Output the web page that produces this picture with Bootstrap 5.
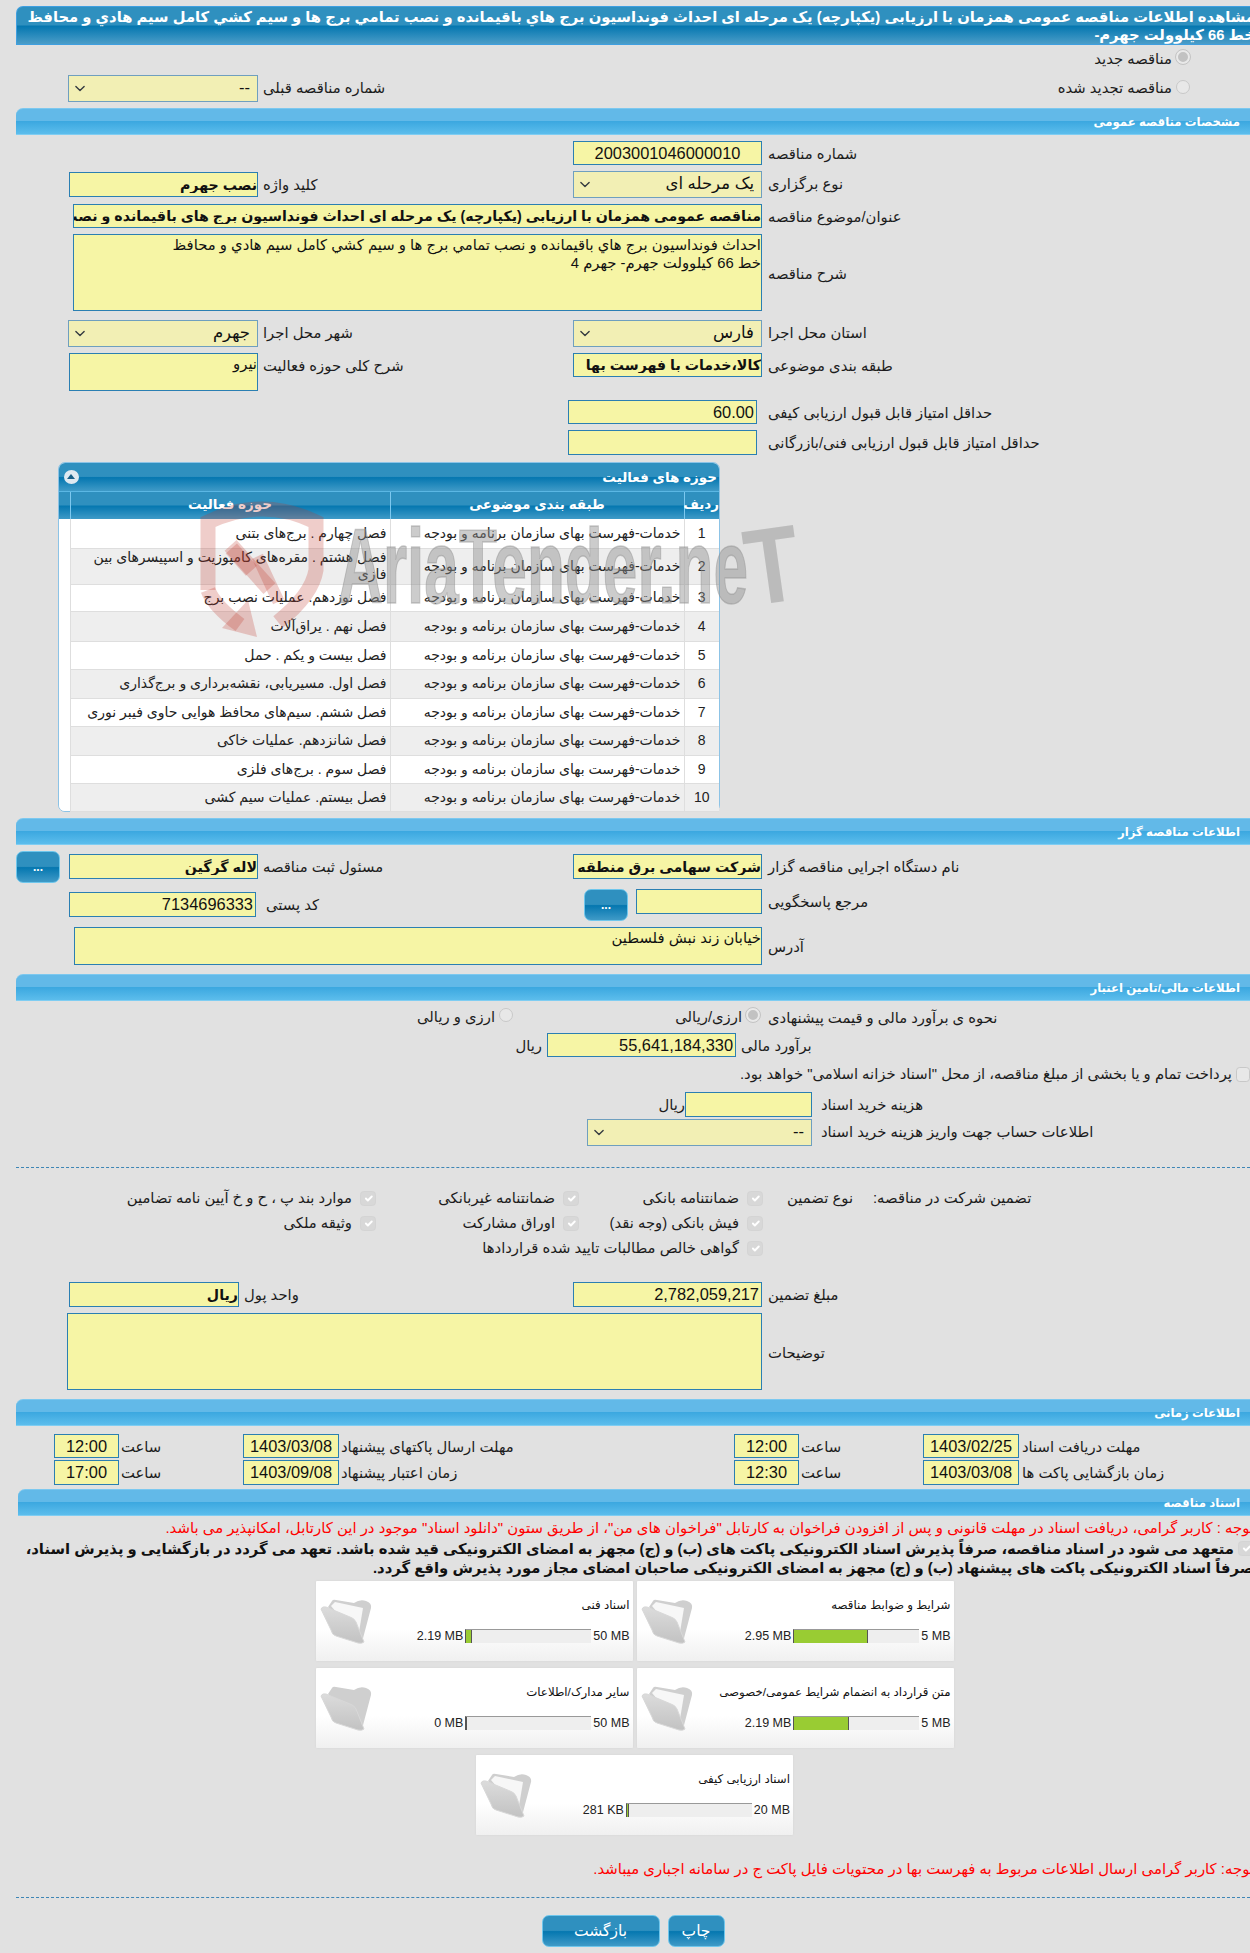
<!DOCTYPE html>
<html lang="fa" dir="rtl">
<head>
<meta charset="utf-8">
<title>مشاهده اطلاعات مناقصه</title>
<link href="https://cdn.jsdelivr.net/npm/bootstrap@5.3.0/dist/css/bootstrap.min.css" rel="stylesheet">
<style>
html,body{margin:0;background:#e1e1e1;overflow:hidden}
body{width:1250px;height:1953px;font-family:"Liberation Sans","DejaVu Sans",sans-serif;font-size:14.8px;color:#1c1c1c;line-height:17px}
.sheet{padding-left:16px;padding-top:6px;width:1250px;height:1953px;overflow:hidden}
.ttl{height:39px;background:linear-gradient(#2f90bf 0,#2f90bf 48%,#0577b0 52%,#4b9dc8 100%);border:1px solid #3f9fe0;border-right:0;border-radius:7px 0 0 0;color:#fff;font-weight:700;font-size:14.75px;line-height:18px;padding:1px 0 0 2px;margin:0 -5px 0 0;text-align:right}
.bar{height:27px;background:linear-gradient(#62b9e8 0,#62b9e8 47%,#3ca8e0 50%,#5cbdec 100%);border-top:1px solid #7cc8ef;border-bottom:1px solid #7fcdf2;border-radius:7px 0 0 0;color:#fff;font-weight:700;font-size:11.7px;line-height:25px;padding-right:10px;text-align:right}
.bar-in{margin-left:2px}
.lb{flex:none;text-align:left;line-height:22px;padding-top:2px}
.rh{width:677px;flex:none}
.lh{width:557px;flex:none}
.fv,.sv{flex:none;border-radius:0;font-family:"Liberation Sans","DejaVu Sans",sans-serif;color:#111;box-shadow:none!important}
.fv{background:#f6f5a5;border:1px solid #2b7fb2;font-size:16.4px;line-height:20px;min-height:0;text-align:right;resize:none;padding:0 2px}
.fv:focus{background:#f6f5a5;border-color:#2b7fb2;color:#111}
.fb{font-weight:700;font-size:14.2px;padding:0}
.fc{text-align:center}
.fl{font-size:14.8px;line-height:18px;padding:1px 0 0}
.sv{background-color:#f2efb4;border:1px solid #6f9fbf;font-size:16.5px;height:27px;min-height:0;padding:0 7px 3px 20px;background-position:left 4px center;background-size:14px 11px;line-height:20px}
.sv:focus{background-color:#f2efb4;border-color:#6f9fbf}
.dash{border:0;border-top:1px dashed #3d86b5;opacity:1;margin:0}
.w65{width:65px}.w96{width:96px}.w126{width:126px}.w127{width:127px}.w170{width:170px}.w187{width:187px}.w188{width:188px}.w189{width:189px}.w190{width:190px}.w225{width:225px}.w688{width:688px}.w689{width:689px}.w695{width:695px}
.h18{height:18px}.h24{height:24px}.h25{height:25px}.h26{height:26px}.h27{height:27px}.h32{height:32px}.h38{height:38px}.h77{height:77px}
.l482{width:482px}.l310{width:310px}.l307{width:307px}.l509{width:509px}.l429{width:429px}.l329{width:329px}.l228{width:228px}.l122{width:122px}.l393{width:393px}
.mt1x{margin-top:1px}.mt2x{margin-top:2px}.mt3x{margin-top:3px}.mt4x{margin-top:4px}.mt5x{margin-top:5px}.mt6x{margin-top:6px}.mt7x{margin-top:7px}.mt8x{margin-top:8px}.mt9x{margin-top:9px}.mt17x{margin-top:17px}.mt18x{margin-top:18px}.mt19x{margin-top:19px}.mt21x{margin-top:21px}.mt26x{margin-top:26px}
.ml2x{margin-left:2px}.ml3x{margin-left:3px}.ml5x{margin-left:5px}.ml6x{margin-left:6px}.ml8x{margin-left:8px}.ml9x{margin-left:9px}.ml10x{margin-left:10px}.ml11x{margin-left:11px}.mr2x{margin-right:2px}
.pr60{padding-right:60px}.gr1{width:247px;flex:none}
.rd{width:14px;height:14px;margin:0 0 0 4px;flex:none;background:#e8e8e8;border:1px solid #c8c8c8;opacity:1!important;background-image:none!important}
.rd:checked{background:#c2c2c2;border:2px solid #e9e9e9;outline:1px solid #c4c4c4;outline-offset:0}
.rdup{margin-top:-4px}
.cb{width:16px;height:15px;margin:0;flex:none;background-color:#d8d8d8;border:1px solid #d4d4d4;border-radius:2px;opacity:1!important}
.cb:checked{background-color:#d8d8d8;border-color:#d4d4d4}
.cb0{width:14px;background:#e8e8e8;border-color:#c8c8c8}
.panel{position:relative;width:662px;height:350px;margin-right:530px;background:#fff;border:1px solid #8cc3e6;border-radius:7px}
.ph{height:29px;background:linear-gradient(#2f90bf 0,#2f90bf 48%,#0577b0 52%,#3f9ac7 100%);border-radius:6px 6px 0 0;color:#fff;font-weight:700;font-size:13.5px;line-height:27px;padding:0 2px 0 5px;border-bottom:1px solid #5bb7e4}
.tgl{width:15px;height:14px;border-radius:50%;background:#dfe9f1;position:relative;flex:none}
.tgl:after{content:"";position:absolute;left:3px;top:4px;border:4.5px solid transparent;border-top:0;border-bottom:5px solid #185f88}
.tb{table-layout:fixed;width:660px;border-collapse:collapse;margin:0;font-size:14px}
.table.tb>:not(caption)>*>*{padding:0 3px;border:0;background:transparent;box-shadow:none;vertical-align:middle;line-height:21px;color:#222}
.table.tb>thead>tr>th{height:27px;background:linear-gradient(#2f90bf 0,#2f90bf 48%,#0577b0 52%,#3f9ac7 100%);color:#fff;font-weight:700;font-size:13.5px;text-align:center;border-left:1px solid #7cc8ef;padding:0 0 3px}
.table.tb>thead>tr>th:last-child{border-left:0}
.table.tb>tbody>tr>td{border-left:1px solid #dedede;border-bottom:1px solid #dedede;text-align:right}
.table.tb>tbody>tr>td:first-child{text-align:center}
.table.tb>tbody>tr>td:last-child{border:0;background:#fff}
.table.tb>tbody>tr.zeb>td{background:#eee}
.table.tb>tbody>tr.zeb>td:last-child{background:#fff}
.table.tb>tbody>tr:last-child>td:last-child{border-bottom-left-radius:6px}
.table.tb>tbody>tr>td.lh-sm{line-height:18px}
.r27{height:27px}.r28{height:28px}.r29{height:29px}.r30{height:30px}.r36{height:36px}
.c1{width:35px}.c2{width:294px}.c3{width:320px}.c4{width:11px}
.wm{position:absolute;left:131px;top:27px;pointer-events:none}
.bt{background:linear-gradient(#2f90bf 0,#2f90bf 48%,#0577b0 52%,#3f9ac7 100%);border:1px solid #6ec6ec;border-radius:7px;color:#fff;padding:0;font-size:15.5px;line-height:28px;flex:none}
.bt:hover{color:#fff}
.b44{width:44px;height:32px;font-weight:700;line-height:30px;font-size:12px}
.bsave{width:118px;height:32px}.bprint{width:57px;height:32px}
.gA{width:377px;text-align:left;flex:none}
.gB{width:110px;flex:none;padding-right:20px}
.gC{width:184px;flex:none}.gD{width:203px;flex:none}
.gs{margin-left:8px}
.note{color:#f00;line-height:17px;margin-right:-4px;font-size:14.9px}
.pledge{font-weight:700;color:#111;font-size:14.8px;line-height:19px;margin:3px -4px 0 0;padding:0}
.pledge .cb{vertical-align:-2px;margin-left:4px}
.cards{padding-left:3px}
.fcard{width:317px;height:80px;flex:none;background:linear-gradient(#fff 0,#fff 60%,#f0f0f0 100%);box-shadow:0 0 2px #d2d2d2;border-radius:1px}
.fb2{flex:1;padding:15px 3px 0 0;min-width:0;text-align:right}
.ftit{font-size:11.8px;line-height:18px;height:33px;color:#111}
.fsize{font-size:12.5px;line-height:14px;color:#222;flex:none}
.prog{width:126px;height:14px;flex:none;border-radius:0;background:#eee;border-top:1px solid #999;border-left:1px solid #555}
.prog .progress-bar{background:#9c3;border-right:1px solid #555}
.fico{width:52px;height:46px;margin:17px 0 0 4px;flex:none}
.mb7x{margin-bottom:7px}
</style>
</head>
<body>
<svg width="0" height="0" class="position-absolute">
<defs>
<linearGradient id="fg" x1="0" y1="0" x2="0" y2="1"><stop offset="0" stop-color="#dcdcdc"/><stop offset="1" stop-color="#c2c2c2"/></linearGradient>
<symbol id="fld" viewBox="0 0 52 46">
<path d="M8 9 L12 3 Q13 1 16 2 L34 5 Q40 1 46 3 Q52 5 51 10 L42 44 Q40 46 36 43 Z" fill="#cfcfcf"/>
<path d="M11 8 L15 4 L43 10 L38 40 Z" fill="#f7f7f7"/>
<path d="M1 11 Q2 8 6 9 L30 19 Q34 20 36 24 L44 44 Q42 46 38 45 L16 38 Q12 37 11 32 Z" fill="url(#fg)" stroke="#d8d8d8"/>
</symbol>
<symbol id="fld0" viewBox="0 0 52 46">
<path d="M8 9 L12 3 Q13 1 16 2 L34 5 Q40 1 46 3 Q52 5 51 10 L42 44 Q40 46 36 43 Z" fill="#cfcfcf"/>
<path d="M1 11 Q2 8 6 9 L30 19 Q34 20 36 24 L44 44 Q42 46 38 45 L16 38 Q12 37 11 32 Z" fill="url(#fg)" stroke="#d8d8d8"/>
</symbol>
</defs>
</svg>
<main class="sheet">
<h1 class="ttl">مشاهده اطلاعات مناقصه عمومی همزمان با ارزیابی (یکپارچه) یک مرحله ای احداث فونداسیون برج هاي باقیمانده و نصب تمامي برج ها و سیم کشي کامل سیم هادي و محافظ خط 66 کیلوولت جهرم-</h1>

<div class="d-flex mt5x h18 align-items-center pr60"><input class="form-check-input rd rdup" type="radio" name="t" checked disabled><span>مناقصه جدید</span></div>

<div class="d-flex mt7x">
  <div class="rh d-flex align-items-center pr60"><input class="form-check-input rd rdup" type="radio" name="t" disabled><span>مناقصه تجدید شده</span></div>
  <div class="lh d-flex">
    <div class="lb l310 ml5x h27">شماره مناقصه قبلی</div>
    <select class="form-select sv w190"><option>--</option></select>
  </div>
</div>

<div class="bar mt6x">مشخصات مناقصه عمومی</div>

<div class="d-flex mt6x"><div class="rh d-flex"><div class="lb l482 ml6x">شماره مناقصه</div><input class="form-control fv fc w189 h24" value="2003001046000010" readonly></div></div>

<div class="d-flex mt6x">
  <div class="rh d-flex"><div class="lb l482 ml6x">نوع برگزاری</div><select class="form-select sv w189"><option>یک مرحله ای</option></select></div>
  <div class="lh d-flex mt1x"><div class="lb l310 ml5x">کلید واژه</div><input class="form-control fv fb w189 h25" value="نصب جهرم" readonly></div>
</div>

<div class="d-flex mt6x"><div class="lb l482 ml6x">عنوان/موضوع مناقصه</div><input class="form-control fv fb w689 h24" value="مناقصه عمومی همزمان با ارزیابی (یکپارچه) یک مرحله ای احداث فونداسیون برج هاي باقیمانده و نصب تمامي برج ها و سیم کشي کامل سیم هادي و محافظ" readonly></div>

<div class="d-flex mt6x align-items-center"><div class="lb l482 ml6x">شرح مناقصه</div><textarea class="form-control fv fl w689 h77" readonly>احداث فونداسیون برج هاي باقیمانده و نصب تمامي برج ها و سیم کشي کامل سیم هادي و محافظ
خط 66 کیلوولت جهرم- جهرم 4</textarea></div>

<div class="d-flex mt9x">
  <div class="rh d-flex"><div class="lb l482 ml6x">استان محل اجرا</div><select class="form-select sv w189"><option>فارس</option></select></div>
  <div class="lh d-flex"><div class="lb l310 ml5x">شهر محل اجرا</div><select class="form-select sv w190"><option>جهرم</option></select></div>
</div>

<div class="d-flex mt6x align-items-start">
  <div class="rh d-flex"><div class="lb l482 ml6x">طبقه بندی موضوعی</div><input class="form-control fv fb w189 h24" value="کالا،خدمات با فهرست بها" readonly></div>
  <div class="lh d-flex"><div class="lb l310 ml5x">شرح کلی حوزه فعالیت</div><textarea class="form-control fv fl w189 h38" readonly>نیرو</textarea></div>
</div>

<div class="d-flex mt9x"><div class="lb l482 ml11x">حداقل امتیاز قابل قبول ارزیابی کیفی</div><input class="form-control fv w189 h24" value="60.00" readonly></div>
<div class="d-flex mt6x"><div class="lb l482 ml11x h25">حداقل امتیاز قابل قبول ارزیابی فنی/بازرگانی</div><input class="form-control fv w189 h25" value="" readonly></div>

<section class="panel mt7x">
  <div class="ph d-flex justify-content-between align-items-center"><span>حوزه های فعالیت</span><span class="tgl"></span></div>
  <table class="table tb">
    <colgroup><col class="c1"><col class="c2"><col class="c3"><col class="c4"></colgroup>
    <thead><tr><th>ردیف</th><th>طبقه بندی موضوعی</th><th>حوزه فعالیت</th><th></th></tr></thead>
    <tbody>
      <tr class="r29"><td>1</td><td>خدمات-فهرست بهای سازمان برنامه و بودجه</td><td>فصل چهارم . برج‌های بتنی</td><td></td></tr>
      <tr class="r36 zeb"><td>2</td><td>خدمات-فهرست بهای سازمان برنامه و بودجه</td><td class="lh-sm">فصل هشتم . مقره‌های کامپوزیت و اسپیسرهای بین فازی</td><td></td></tr>
      <tr class="r27"><td>3</td><td>خدمات-فهرست بهای سازمان برنامه و بودجه</td><td>فصل نوزدهم. عملیات نصب برج</td><td></td></tr>
      <tr class="r30 zeb"><td>4</td><td>خدمات-فهرست بهای سازمان برنامه و بودجه</td><td>فصل نهم . یراق‌آلات</td><td></td></tr>
      <tr class="r28"><td>5</td><td>خدمات-فهرست بهای سازمان برنامه و بودجه</td><td>فصل بیست و یکم . حمل</td><td></td></tr>
      <tr class="r29 zeb"><td>6</td><td>خدمات-فهرست بهای سازمان برنامه و بودجه</td><td>فصل اول. مسیریابی، نقشه‌برداری و برج‌گذاری</td><td></td></tr>
      <tr class="r28"><td>7</td><td>خدمات-فهرست بهای سازمان برنامه و بودجه</td><td>فصل ششم. سیم‌های محافظ هوایی حاوی فیبر نوری</td><td></td></tr>
      <tr class="r29 zeb"><td>8</td><td>خدمات-فهرست بهای سازمان برنامه و بودجه</td><td>فصل شانزدهم. عملیات خاکی</td><td></td></tr>
      <tr class="r28"><td>9</td><td>خدمات-فهرست بهای سازمان برنامه و بودجه</td><td>فصل سوم . برج‌های فلزی</td><td></td></tr>
      <tr class="r28 zeb"><td>10</td><td>خدمات-فهرست بهای سازمان برنامه و بودجه</td><td>فصل بیستم. عملیات سیم کشی</td><td></td></tr>
    </tbody>
  </table>
  <svg class="wm" width="620" height="160" viewBox="190 490 620 160" aria-hidden="true">
    <g fill="none" stroke="#c0392b" stroke-opacity=".25" stroke-width="15">
      <path d="M208 590 V522 Q262 496 316 522 V570 Q312 595 278 622"/>
      <path d="M208 590 Q214 606 240 625"/>
    </g>
    <polygon points="257,637 222,628 248,600" fill="#c0392b" fill-opacity=".25"/>
    <g fill="#c0392b" fill-opacity=".25">
      <rect x="226" y="552" width="30" height="15" transform="rotate(48 241 560)"/>
      <rect x="242" y="538" width="16" height="58" transform="rotate(-42 250 567)"/>
      <rect x="262" y="554" width="12" height="50" transform="rotate(-25 268 579)"/>
    </g>
    <text x="338" y="603" direction="ltr" font-family="Liberation Sans" font-weight="700" font-size="105" textLength="410" lengthAdjust="spacingAndGlyphs" fill="#8f8f8f" fill-opacity=".45" stroke="#8f8f8f" stroke-opacity=".45" stroke-width="1.5">AriaTender.ne</text>
    <text x="746" y="603" direction="ltr" transform="rotate(-8 770 570)" font-family="Liberation Sans" font-weight="700" font-size="108" textLength="54" lengthAdjust="spacingAndGlyphs" fill="#8f8f8f" fill-opacity=".45">T</text>
  </svg>
</section>

<div class="bar mt6x">اطلاعات مناقصه گزار</div>

<div class="d-flex mt6x">
  <div class="rh d-flex mt3x"><div class="lb l482 ml6x">نام دستگاه اجرایی مناقصه گزار</div><input class="form-control fv fb w189 h25" value="شرکت سهامی برق منطقه ای فارس" readonly></div>
  <div class="lh d-flex">
    <div class="lb l310 ml5x mt3x">مسئول ثبت مناقصه</div><input class="form-control fv fb w189 h25 mt3x" value="لاله گرگین" readonly>
    <button type="button" class="btn bt b44 me-auto">...</button>
  </div>
</div>

<div class="d-flex mt6x align-items-start">
  <div class="rh d-flex"><div class="lb l482 ml6x">مرجع پاسخگویی</div><input class="form-control fv w126 h25 ml8x" value="" readonly><button type="button" class="btn bt b44">...</button></div>
  <div class="lh d-flex mt3x"><div class="lb l307 ml10x">کد پستی</div><input class="form-control fv w187 h25" value="7134696333" readonly></div>
</div>

<div class="d-flex mt6x align-items-center"><div class="lb l482 ml6x">آدرس</div><textarea class="form-control fv fl w688 h38" readonly>خیابان زند نبش فلسطین</textarea></div>

<div class="bar mt9x">اطلاعات مالی/تامین اعتبار</div>

<div class="d-flex mt7x h18 align-items-center">
  <div class="lb l482 ml8x">نحوه ی برآورد مالی و قیمت پیشنهادی</div>
  <div class="d-flex align-items-center gr1"><input class="form-check-input rd rdup" type="radio" name="a" checked disabled><span>ارزی/ریالی</span></div>
  <div class="d-flex align-items-center"><input class="form-check-input rd rdup" type="radio" name="a" disabled><span>ارزی و ریالی</span></div>
</div>

<div class="d-flex mt7x"><div class="lb l509 ml5x">برآورد مالی</div><input class="form-control fv w189 h24 ml5x" value="55,641,184,330" readonly><span class="lb">ریال</span></div>

<div class="d-flex mt8x align-items-center h18"><input class="form-check-input cb cb0" type="checkbox" disabled><span class="me-1">پرداخت تمام و یا بخشی از مبلغ مناقصه، از محل "اسناد خزانه اسلامی" خواهد بود.</span></div>

<div class="d-flex mt9x"><div class="lb l429 ml9x">هزینه خرید اسناد</div><input class="form-control fv w127 h25" value="" readonly><span class="lb">ریال</span></div>
<div class="d-flex mt2x"><div class="lb l429 ml9x">اطلاعات حساب جهت واریز هزینه خرید اسناد</div><select class="form-select sv w225"><option>--</option></select></div>

<hr class="dash mt21x">

<div class="d-flex mt18x h25 align-items-center">
  <div class="gA">تضمین شرکت در مناقصه:</div><div class="gB">نوع تضمین</div>
  <div class="gC d-flex align-items-center"><input class="form-check-input cb gs" type="checkbox" checked disabled>ضمانتنامه بانکی</div>
  <div class="gD d-flex align-items-center"><input class="form-check-input cb gs" type="checkbox" checked disabled>ضمانتنامه غیربانکی</div>
  <div class="d-flex align-items-center"><input class="form-check-input cb gs" type="checkbox" checked disabled>موارد بند پ ، ح و خ آیین نامه تضامین</div>
</div>
<div class="d-flex h25 align-items-center">
  <div class="gA"></div><div class="gB"></div>
  <div class="gC d-flex align-items-center"><input class="form-check-input cb gs" type="checkbox" checked disabled>فیش بانکی (وجه نقد)</div>
  <div class="gD d-flex align-items-center"><input class="form-check-input cb gs" type="checkbox" checked disabled>اوراق مشارکت</div>
  <div class="d-flex align-items-center"><input class="form-check-input cb gs" type="checkbox" checked disabled>وثیقه ملکی</div>
</div>
<div class="d-flex h25 align-items-center">
  <div class="gA"></div><div class="gB"></div>
  <div class="d-flex align-items-center"><input class="form-check-input cb gs" type="checkbox" checked disabled>گواهی خالص مطالبات تایید شده قراردادها</div>
</div>

<div class="d-flex mt21x">
  <div class="rh d-flex"><div class="lb l482 ml6x">مبلغ تضمین</div><input class="form-control fv w189 h25" value="2,782,059,217" readonly></div>
  <div class="lh d-flex"><div class="lb l329 ml5x">واحد پول</div><input class="form-control fv fb w170 h25" value="ریال" readonly></div>
</div>

<div class="d-flex mt6x align-items-center"><div class="lb l482 ml6x">توضیحات</div><textarea class="form-control fv fl w695 h77" readonly></textarea></div>

<div class="bar mt9x">اطلاعات زمانی</div>

<div class="d-flex mt8x">
  <div class="lb l228 ml3x">مهلت دریافت اسناد</div><input class="form-control fv fc w96 h24" value="1403/02/25" readonly>
  <div class="lb l122 ml2x">ساعت</div><input class="form-control fv fc w65 h24" value="12:00" readonly>
  <div class="lb l393 ml2x">مهلت ارسال پاکتهای پیشنهاد</div><input class="form-control fv fc w96 h24" value="1403/03/08" readonly>
  <div class="lb l122 ml2x">ساعت</div><input class="form-control fv fc w65 h24" value="12:00" readonly>
</div>
<div class="d-flex mt2x">
  <div class="lb l228 ml3x">زمان بازگشایی پاکت ها</div><input class="form-control fv fc w96 h25" value="1403/03/08" readonly>
  <div class="lb l122 ml2x">ساعت</div><input class="form-control fv fc w65 h25" value="12:30" readonly>
  <div class="lb l393 ml2x">زمان اعتبار پیشنهاد</div><input class="form-control fv fc w96 h25" value="1403/09/08" readonly>
  <div class="lb l122 ml2x">ساعت</div><input class="form-control fv fc w65 h25" value="17:00" readonly>
</div>

<div class="bar bar-in mt4x">اسناد مناقصه</div>

<div class="note mt4x">توجه : کاربر گرامی، دریافت اسناد در مهلت قانونی و پس از افزودن فراخوان به کارتابل "فراخوان های من"، از طریق ستون "دانلود اسناد" موجود در این کارتابل، امکانپذیر می باشد.</div>
<p class="pledge"><input class="form-check-input cb" type="checkbox" checked disabled>متعهد می شود در اسناد مناقصه، صرفاً پذیرش اسناد الکترونیکی پاکت های (ب) و (ج) مجهز به امضای الکترونیکی قید شده باشد. تعهد می گردد در بازگشایی و پذیرش اسناد، صرفاً اسناد الکترونیکی پاکت های پیشنهاد (ب) و (ج) مجهز به امضای الکترونیکی صاحبان امضای مجاز مورد پذیرش واقع گردد.</p>

<div class="cards mt3x">
  <div class="d-flex justify-content-center gap-1 mb7x">
    <div class="fcard d-flex">
      <div class="fb2"><div class="ftit">شرایط و ضوابط مناقصه</div><div class="d-flex align-items-center"><span class="fsize ml2x" dir="ltr">5 MB</span><div class="progress prog" dir="ltr"><div class="progress-bar" style="width:59%"></div></div><span class="fsize mr2x" dir="ltr">2.95 MB</span></div></div>
      <svg class="fico"><use href="#fld"/></svg>
    </div>
    <div class="fcard d-flex">
      <div class="fb2"><div class="ftit">اسناد فنی</div><div class="d-flex align-items-center"><span class="fsize ml2x" dir="ltr">50 MB</span><div class="progress prog" dir="ltr"><div class="progress-bar" style="width:4.4%"></div></div><span class="fsize mr2x" dir="ltr">2.19 MB</span></div></div>
      <svg class="fico"><use href="#fld"/></svg>
    </div>
  </div>
  <div class="d-flex justify-content-center gap-1 mb7x">
    <div class="fcard d-flex">
      <div class="fb2"><div class="ftit">متن قرارداد به انضمام شرایط عمومی/خصوصی</div><div class="d-flex align-items-center"><span class="fsize ml2x" dir="ltr">5 MB</span><div class="progress prog" dir="ltr"><div class="progress-bar" style="width:43.8%"></div></div><span class="fsize mr2x" dir="ltr">2.19 MB</span></div></div>
      <svg class="fico"><use href="#fld"/></svg>
    </div>
    <div class="fcard d-flex">
      <div class="fb2"><div class="ftit">سایر مدارک/اطلاعات</div><div class="d-flex align-items-center"><span class="fsize ml2x" dir="ltr">50 MB</span><div class="progress prog" dir="ltr"><div class="progress-bar" style="width:0%"></div></div><span class="fsize mr2x" dir="ltr">0 MB</span></div></div>
      <svg class="fico"><use href="#fld0"/></svg>
    </div>
  </div>
  <div class="d-flex justify-content-center">
    <div class="fcard d-flex">
      <div class="fb2"><div class="ftit">اسناد ارزیابی کیفی</div><div class="d-flex align-items-center"><span class="fsize ml2x" dir="ltr">20 MB</span><div class="progress prog" dir="ltr"><div class="progress-bar" style="width:1.4%"></div></div><span class="fsize mr2x" dir="ltr">281 KB</span></div></div>
      <svg class="fico"><use href="#fld"/></svg>
    </div>
  </div>
</div>

<div class="note mt26x">توجه: کاربر گرامی ارسال اطلاعات مربوط به فهرست بها در محتویات فایل پاکت ج در سامانه اجباری میباشد.</div>

<hr class="dash mt19x">

<div class="d-flex justify-content-center gap-2 mt17x">
  <button type="button" class="btn bt bprint">چاپ</button>
  <button type="button" class="btn bt bsave">بازگشت</button>
</div>
</main>
<script src="https://cdn.jsdelivr.net/npm/bootstrap@5.3.0/dist/js/bootstrap.bundle.min.js"></script>
</body>
</html>
